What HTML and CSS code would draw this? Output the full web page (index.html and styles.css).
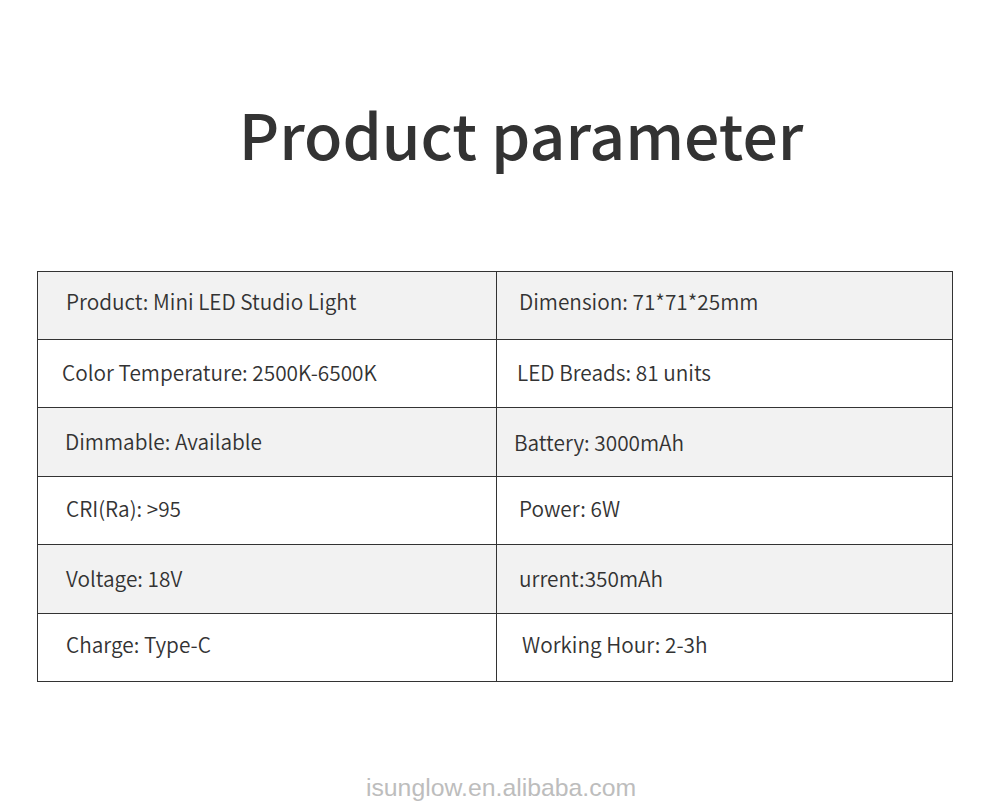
FILE: index.html
```html
<!DOCTYPE html>
<html>
<head>
<meta charset="utf-8">
<link rel="stylesheet" href="styles.css">
</head>
<body>
<div class="page">
  <h1 class="title">Product parameter</h1>
  <div class="table">
    <div class="row shade">
      <div class="cell left up">Product: Mini LED Studio Light</div>
      <div class="cell right up">Dimension: 71*71*25mm</div>
    </div>
    <div class="row">
      <div class="cell left nudge-l4">Color Temperature: 2500K-6500K</div>
      <div class="cell right nudge-l2">LED Breads: 81 units</div>
    </div>
    <div class="row shade">
      <div class="cell left nudge-l1">Dimmable: Available</div>
      <div class="cell right nudge-l5">Battery: 3000mAh</div>
    </div>
    <div class="row">
      <div class="cell left down">CRI(Ra): &gt;95</div>
      <div class="cell right down">Power: 6W</div>
    </div>
    <div class="row shade">
      <div class="cell left down2">Voltage: 18V</div>
      <div class="cell right down2">urrent:350mAh</div>
    </div>
    <div class="row">
      <div class="cell left">Charge: Type-C</div>
      <div class="cell right nudge-r3">Working Hour: 2-3h</div>
    </div>
  </div>
  <div class="mark">isunglow.en.alibaba.com</div>
</div>
</body>
</html>
```

FILE: styles.css
```css
html, body {
  margin: 0;
  padding: 0;
  background: #ffffff;
}
.page {
  width: 1000px;
  height: 811px;
  display: flex;
  flex-direction: column;
  font-family: "Noto Sans CJK SC", "Noto Sans", sans-serif;
  color: #333333;
}
.title {
  margin: 0;
  padding-top: 88px;
  padding-left: 42px;
  height: 271px;
  flex: none;
  box-sizing: border-box;
  text-align: center;
  font-size: 62.5px;
  font-weight: 500;
  line-height: 90px;
  letter-spacing: 0;
  color: #333333;
}
.table {
  margin-left: 37px;
  width: 916px;
  flex: none;
  border: 1px solid #333333;
  box-sizing: border-box;
  display: flex;
  flex-direction: column;
}
.row {
  display: grid;
  grid-template-columns: 459px 1fr;
  height: 68.4px;
  box-sizing: border-box;
  border-top: 1px solid #333333;
  background: #ffffff;
}
.row:first-child {
  border-top: none;
  height: 67px;
}
.row.shade {
  background: #f2f2f2;
}
.cell {
  display: flex;
  align-items: center;
  font-size: 20.8px;
  font-weight: 350;
  color: #333333;
  padding-bottom: 7px;
}
.left {
  padding-left: 28px;
  border-right: 1px solid #333333;
}
.right {
  padding-left: 22px;
}
.up { padding-bottom: 9px; }
.down { padding-bottom: 4px; }
.down2 { padding-bottom: 1px; }
.nudge-l4 { padding-left: 24px; padding-bottom: 4px; }
.nudge-l1 { padding-left: 27px; padding-bottom: 3px; }
.nudge-l2 { padding-left: 20px; padding-bottom: 4px; }
.nudge-l5 { padding-left: 17px; padding-bottom: 1px; }
.nudge-r3 { padding-left: 25px; }
.mark {
  margin-top: 92px;
  text-align: center;
  font-family: "Liberation Sans", Arial, sans-serif;
  font-size: 24.8px;
  color: #bdbdbd;
  padding-left: 2px;
}
```
